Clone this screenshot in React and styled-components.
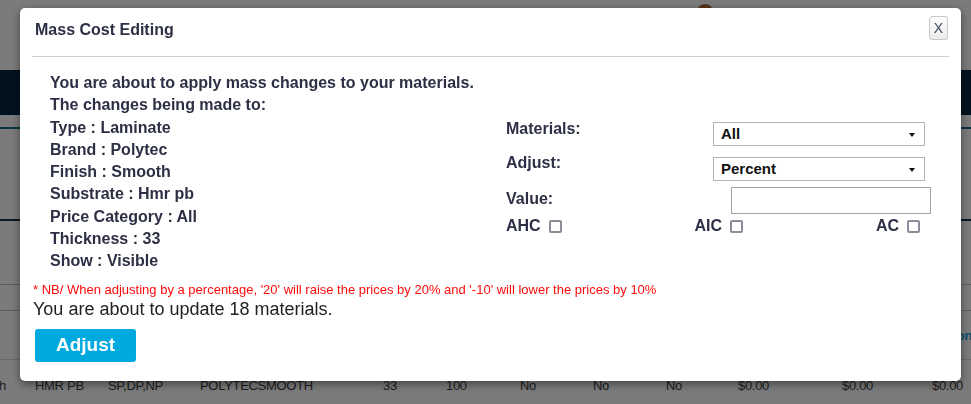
import styled, { createGlobalStyle } from "styled-components";

const GlobalStyle = createGlobalStyle`
  html, body {
    margin: 0;
    padding: 0;
    background: #7b7b7b;
    font-family: "Liberation Sans", Arial, sans-serif;
    overflow: hidden;
  }
  * { box-sizing: border-box; }
`;

/* ---------- dimmed page behind the modal ---------- */

const Page = styled.div`
  width: 971px;
  height: 404px;
  display: flex;
  flex-direction: column;
  overflow: hidden;

  & > * {
    flex-shrink: 0;
  }
`;

const TopStrip = styled.div`
  height: 70px;
  display: flex;
  justify-content: center;
`;

const Avatar = styled.div`
  margin-left: 438px;
  margin-top: 4px;
  width: 16px;
  height: 8px;
  border-radius: 8px 8px 0 0;
  background: #5a3319;
`;

const NavBand = styled.div`
  height: 45px;
  background: #03121f;
`;

const Rule = styled.div`
  height: ${(p) => p.$h || 1}px;
  margin-top: ${(p) => p.$top || 0}px;
  background: ${(p) => p.$color || "#5e5e5e"};
`;

const Row = styled.div`
  display: grid;
  grid-template-columns: 35px 73px 92px 183px 63px 74px 73px 73px 72px 104px 90px 1fr;
  height: ${(p) => p.$h}px;
  align-items: center;
  font-size: 13px;
  color: #1c1c1c;
  white-space: nowrap;
`;

const Cell = styled.div`
  overflow: hidden;
  display: flex;
  justify-content: ${(p) => (p.$end ? "flex-end" : "flex-start")};
  padding-right: ${(p) => p.$pr || 0}px;
  font-weight: ${(p) => (p.$bold ? 700 : 400)};
  color: ${(p) => p.$color || "inherit"};
  letter-spacing: -0.3px;
`;

/* ---------- modal ---------- */

const Modal = styled.div`
  position: fixed;
  left: 20px;
  top: 8px;
  width: 941px;
  height: 373px;
  background: #fff;
  border-radius: 5px;
  box-shadow: 0 3px 9px rgba(0, 0, 0, 0.45);
  padding: 0 12px;
  display: flex;
  flex-direction: column;
`;

const Header = styled.div`
  height: 49px;
  border-bottom: 1px solid #cfcfcf;
  display: flex;
  align-items: center;
  justify-content: space-between;
  padding: 0 1px 4px 3px;
`;

const Title = styled.h4`
  margin: 0;
  font-size: 16px;
  font-weight: 700;
  color: #2d2f45;
`;

const CloseBtn = styled.button`
  width: 19px;
  height: 24px;
  margin-top: -4px;
  padding: 0;
  border: 1px solid #c8c8c8;
  border-radius: 3px;
  background: linear-gradient(#fdfdfd, #ececec);
  font-family: inherit;
  font-size: 14px;
  color: #3a4a5e;
  line-height: 20px;
`;

const Body = styled.div`
  display: flex;
  padding: 15px 0 0 18px;
`;

const Summary = styled.div`
  width: 456px;
  font-size: 16px;
  font-weight: 700;
  line-height: 22.3px;
  color: #2d2f45;
`;

const Form = styled.div`
  margin-top: 48px;
  display: flex;
  flex-direction: column;
  width: 426px;
`;

const FieldRow = styled.div`
  display: flex;
  align-items: flex-start;
  height: ${(p) => p.$h}px;
`;

const Label = styled.div`
  flex: 0 0 207px;
  margin-top: ${(p) => p.$top || 0}px;
  font-size: 16px;
  font-weight: 700;
  line-height: 18px;
  color: #2d2f45;
`;

const SelectBox = styled.div`
  position: relative;
  margin-top: ${(p) => p.$top || 0}px;
  width: 212px;
  height: 24px;
  border: 1px solid #b3b3b3;
  background: #fff;
  font-size: 15px;
  font-weight: 700;
  color: #111;
  line-height: 22px;
  padding-left: 7px;

  &::after {
    content: "";
    position: absolute;
    right: 9px;
    top: 10px;
    border-left: 3.5px solid transparent;
    border-right: 3.5px solid transparent;
    border-top: 4px solid #111;
  }
`;

const TextInput = styled.input`
  margin-left: 18px;
  width: 200px;
  height: 27px;
  border: 1px solid #a3a3a3;
  outline: none;
  padding: 0 6px;
`;

const ChecksRow = styled.div`
  width: 414px;
  display: flex;
  justify-content: space-between;
  align-items: center;
  height: 18px;
`;

const CheckItem = styled.label`
  display: flex;
  align-items: center;
  gap: 8px;
  font-size: 16px;
  font-weight: 700;
  color: #2d2f45;
`;

const CheckBox = styled.span`
  display: inline-block;
  width: 13px;
  height: 13px;
  border: 2px solid #8d8d99;
  border-radius: 2px;
  background: #fff;
`;

const Note = styled.div`
  margin-top: 9px;
  font-size: 13px;
  line-height: 15px;
  color: #ff0a0a;
  padding-left: 1px;
`;

const UpdateText = styled.div`
  margin-top: 2px;
  font-size: 18px;
  line-height: 21px;
  color: #222;
  padding-left: 1px;
`;

const AdjustBtn = styled.button`
  margin: 9px 0 0 3px;
  width: 101px;
  height: 33px;
  border: none;
  border-radius: 3px;
  background: #00a9df;
  color: #fff;
  font-family: inherit;
  font-size: 19px;
  font-weight: 700;
`;

const summary = [
  "You are about to apply mass changes to your materials.",
  "The changes being made to:",
  "Type : Laminate",
  "Brand : Polytec",
  "Finish : Smooth",
  "Substrate : Hmr pb",
  "Price Category : All",
  "Thickness : 33",
  "Show : Visible",
];

const dataRow = [
  "HMR PB",
  "SP,DP,NP",
  "POLYTECSMOOTH",
  "33",
  "100",
  "No",
  "No",
  "No",
  "$0.00",
  "$0.00",
  "$0.00",
];

export default function App() {
  return (
    <>
      <GlobalStyle />
      <Page>
        <TopStrip>
          <Avatar />
        </TopStrip>
        <NavBand />
        <Rule $top={12} $h={2} $color="#0c3444" />
        <Rule $top={90} $h={2} $color="#0a1724" />
        <Rule $top={63} />
        <Row $h={25}>
          {dataRow.map((_, i) => (
            <Cell key={i} />
          ))}
          <Cell $bold>Min</Cell>
        </Row>
        <Rule />
        <Row $h={48}>
          {dataRow.map((_, i) => (
            <Cell key={i} />
          ))}
          <Cell $bold $color="#0d4f6b">
            Option
          </Cell>
        </Row>
        <Rule $color="#6a6a6a" />
        <Row $h={50}>
          <Cell $end $pr={29}>Smooth</Cell>
          {dataRow.map((t, i) => (
            <Cell key={i}>{t}</Cell>
          ))}
        </Row>
      </Page>

      <Modal>
        <Header>
          <Title>Mass Cost Editing</Title>
          <CloseBtn>X</CloseBtn>
        </Header>
        <Body>
          <Summary>
            {summary.map((line) => (
              <div key={line}>{line}</div>
            ))}
          </Summary>
          <Form>
            <FieldRow $h={34}>
              <Label>Materials:</Label>
              <SelectBox $top={2}>All</SelectBox>
            </FieldRow>
            <FieldRow $h={33}>
              <Label>Adjust:</Label>
              <SelectBox $top={3}>Percent</SelectBox>
            </FieldRow>
            <FieldRow $h={30}>
              <Label $top={3}>Value:</Label>
              <TextInput />
            </FieldRow>
            <ChecksRow>
              <CheckItem>
                AHC <CheckBox />
              </CheckItem>
              <CheckItem>
                AIC <CheckBox />
              </CheckItem>
              <CheckItem>
                AC <CheckBox />
              </CheckItem>
            </ChecksRow>
          </Form>
        </Body>
        <Note>
          * NB/ When adjusting by a percentage, '20' will raise the prices by 20% and '-10' will lower the prices by 10%
        </Note>
        <UpdateText>You are about to update 18 materials.</UpdateText>
        <div>
          <AdjustBtn>Adjust</AdjustBtn>
        </div>
      </Modal>
    </>
  );
}
